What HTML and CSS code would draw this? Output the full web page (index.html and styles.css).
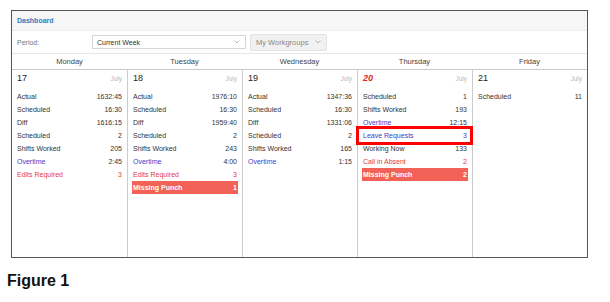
FILE: index.html
```html
<!DOCTYPE html>
<html lang="en">
<head>
    <meta charset="UTF-8">
    <title>Dashboard</title>
    <link rel="stylesheet" href="styles.css">
</head>
<body>
    <div class="panel">
        <div class="panel-title">Dashboard</div>

        <div class="filters">
            <span class="filter-label">Period:</span>
            <div class="select">
                <span>Current Week</span>
                <svg class="chevron" width="6" height="4" viewBox="0 0 6 4"><polyline points="0.5,0.5 3,3 5.5,0.5" fill="none" stroke="#aaa" stroke-width="0.8"/></svg>
            </div>
            <div class="btn-select">
                <span>My Workgroups</span>
                <svg class="chevron" width="6" height="4" viewBox="0 0 6 4"><polyline points="0.5,0.5 3,3 5.5,0.5" fill="none" stroke="#aaa" stroke-width="0.8"/></svg>
            </div>
        </div>

        <div class="week">
            <div class="day-name">Monday</div>
            <div class="day-name">Tuesday</div>
            <div class="day-name">Wednesday</div>
            <div class="day-name">Thursday</div>
            <div class="day-name">Friday</div>

            <!-- Monday -->
            <div class="day">
                <div class="day-head"><span class="day-num">17</span><span class="month">July</span></div>
                <div class="stat"><span>Actual</span><span>1632:45</span></div>
                <div class="stat"><span>Scheduled</span><span>16:30</span></div>
                <div class="stat"><span>Diff</span><span>1616:15</span></div>
                <div class="stat"><span>Scheduled</span><span>2</span></div>
                <div class="stat"><span>Shifts Worked</span><span>205</span></div>
                <div class="stat info"><span>Overtime</span><span class="plain">2:45</span></div>
                <div class="stat warn"><span>Edits Required</span><span>3</span></div>
            </div>

            <!-- Tuesday -->
            <div class="day">
                <div class="day-head"><span class="day-num">18</span><span class="month">July</span></div>
                <div class="stat"><span>Actual</span><span>1976:10</span></div>
                <div class="stat"><span>Scheduled</span><span>16:30</span></div>
                <div class="stat"><span>Diff</span><span>1959:40</span></div>
                <div class="stat"><span>Scheduled</span><span>2</span></div>
                <div class="stat"><span>Shifts Worked</span><span>243</span></div>
                <div class="stat info"><span>Overtime</span><span class="plain">4:00</span></div>
                <div class="stat warn"><span>Edits Required</span><span>3</span></div>
                <div class="stat alert"><span>Missing Punch</span><span>1</span></div>
            </div>

            <!-- Wednesday -->
            <div class="day">
                <div class="day-head"><span class="day-num">19</span><span class="month">July</span></div>
                <div class="stat"><span>Actual</span><span>1347:36</span></div>
                <div class="stat"><span>Scheduled</span><span>16:30</span></div>
                <div class="stat"><span>Diff</span><span>1331:06</span></div>
                <div class="stat"><span>Scheduled</span><span>2</span></div>
                <div class="stat"><span>Shifts Worked</span><span>165</span></div>
                <div class="stat info"><span>Overtime</span><span class="plain">1:15</span></div>
            </div>

            <!-- Thursday (today) -->
            <div class="day">
                <div class="day-head"><span class="day-num today">20</span><span class="month">July</span></div>
                <div class="stat"><span>Scheduled</span><span>1</span></div>
                <div class="stat"><span>Shifts Worked</span><span>193</span></div>
                <div class="stat info"><span>Overtime</span><span class="plain">12:15</span></div>
                <div class="stat info marked"><span>Leave Requests</span><span>3</span></div>
                <div class="stat"><span>Working Now</span><span>133</span></div>
                <div class="stat warn"><span>Call in Absent</span><span>2</span></div>
                <div class="stat alert"><span>Missing Punch</span><span>2</span></div>
            </div>

            <!-- Friday -->
            <div class="day">
                <div class="day-head"><span class="day-num">21</span><span class="month">July</span></div>
                <div class="stat"><span>Scheduled</span><span>11</span></div>
            </div>
        </div>
    </div>

    <div class="caption">Figure 1</div>
</body>
</html>
```

FILE: styles.css
```css
body {
    margin: 0;
    background-color: white;
    font-family: "Liberation Sans", Arial, sans-serif;
    color: #333;
}

.panel {
    box-sizing: border-box;
    width: 577px;
    height: 248px;
    margin: 10px 0 0 11px;
    border: 1px solid #555;
    display: flex;
    flex-direction: column;
}

.panel-title {
    height: 19px;
    line-height: 19px;
    padding-left: 5px;
    background-color: #f6f6f6;
    border-bottom: 1px solid #ececec;
    color: #2f7cc0;
    font-size: 7px;
    font-weight: bold;
}

.filters {
    height: 22px;
    border-bottom: 1px solid #e6e6e6;
    display: flex;
    align-items: center;
    font-size: 7px;
}

.filter-label {
    box-sizing: border-box;
    width: 80px;
    padding-left: 5px;
    color: #777;
}

.select {
    box-sizing: border-box;
    width: 154px;
    height: 14px;
    margin-right: 4px;
    padding: 0 5px 0 4px;
    border: 1px solid #d6d6d6;
    background-color: white;
    display: flex;
    align-items: center;
    justify-content: space-between;
}

.btn-select {
    box-sizing: border-box;
    width: 77px;
    height: 17px;
    padding: 0 5px;
    border: 1px solid #e2e2e2;
    border-radius: 2px;
    background-color: #f1f1f1;
    color: #888;
    font-size: 7.5px;
    display: flex;
    align-items: center;
    justify-content: space-between;
}

.chevron {
    display: block;
}

.week {
    flex: 1;
    display: grid;
    grid-template-columns: repeat(5, 1fr);
    grid-template-rows: 16px 1fr;
}

.day-name {
    border-bottom: 1px solid #cacaca;
    text-align: center;
    line-height: 15px;
    font-size: 7.5px;
    color: #444;
}

.day {
    padding: 1px 4px 0 4px;
    border-left: 1px solid #cccccc;
    font-size: 7px;
}

.day:nth-child(6) {
    border-left: none;
}

.day-head {
    height: 14px;
    margin: 0 1px 5px 1px;
    display: flex;
    align-items: center;
    justify-content: space-between;
}

.day-num {
    font-size: 9px;
    color: #222;
}

.day-num.today {
    color: #e0252b;
    font-weight: bold;
    font-style: italic;
}

.month {
    font-size: 6.5px;
    color: #b8b8b8;
}

.stat {
    position: relative;
    height: 13px;
    line-height: 13px;
    padding: 0 1px;
    display: flex;
    justify-content: space-between;
}

.stat.info {
    color: #3e3ec9;
}

.stat .plain {
    color: #333;
}

.stat.warn {
    color: #e53b3b;
}

.stat.alert {
    background-color: #f26257;
    color: white;
    font-weight: bold;
}

/* red annotation frame round Leave Requests */
.stat.marked::after {
    content: "";
    position: absolute;
    top: -3px;
    bottom: -3px;
    left: -6px;
    right: -5px;
    border: 3px solid #ff0000;
}

.caption {
    margin: 14px 0 0 7px;
    font-size: 16px;
    line-height: 18px;
    font-weight: bold;
    color: #111;
}
```
